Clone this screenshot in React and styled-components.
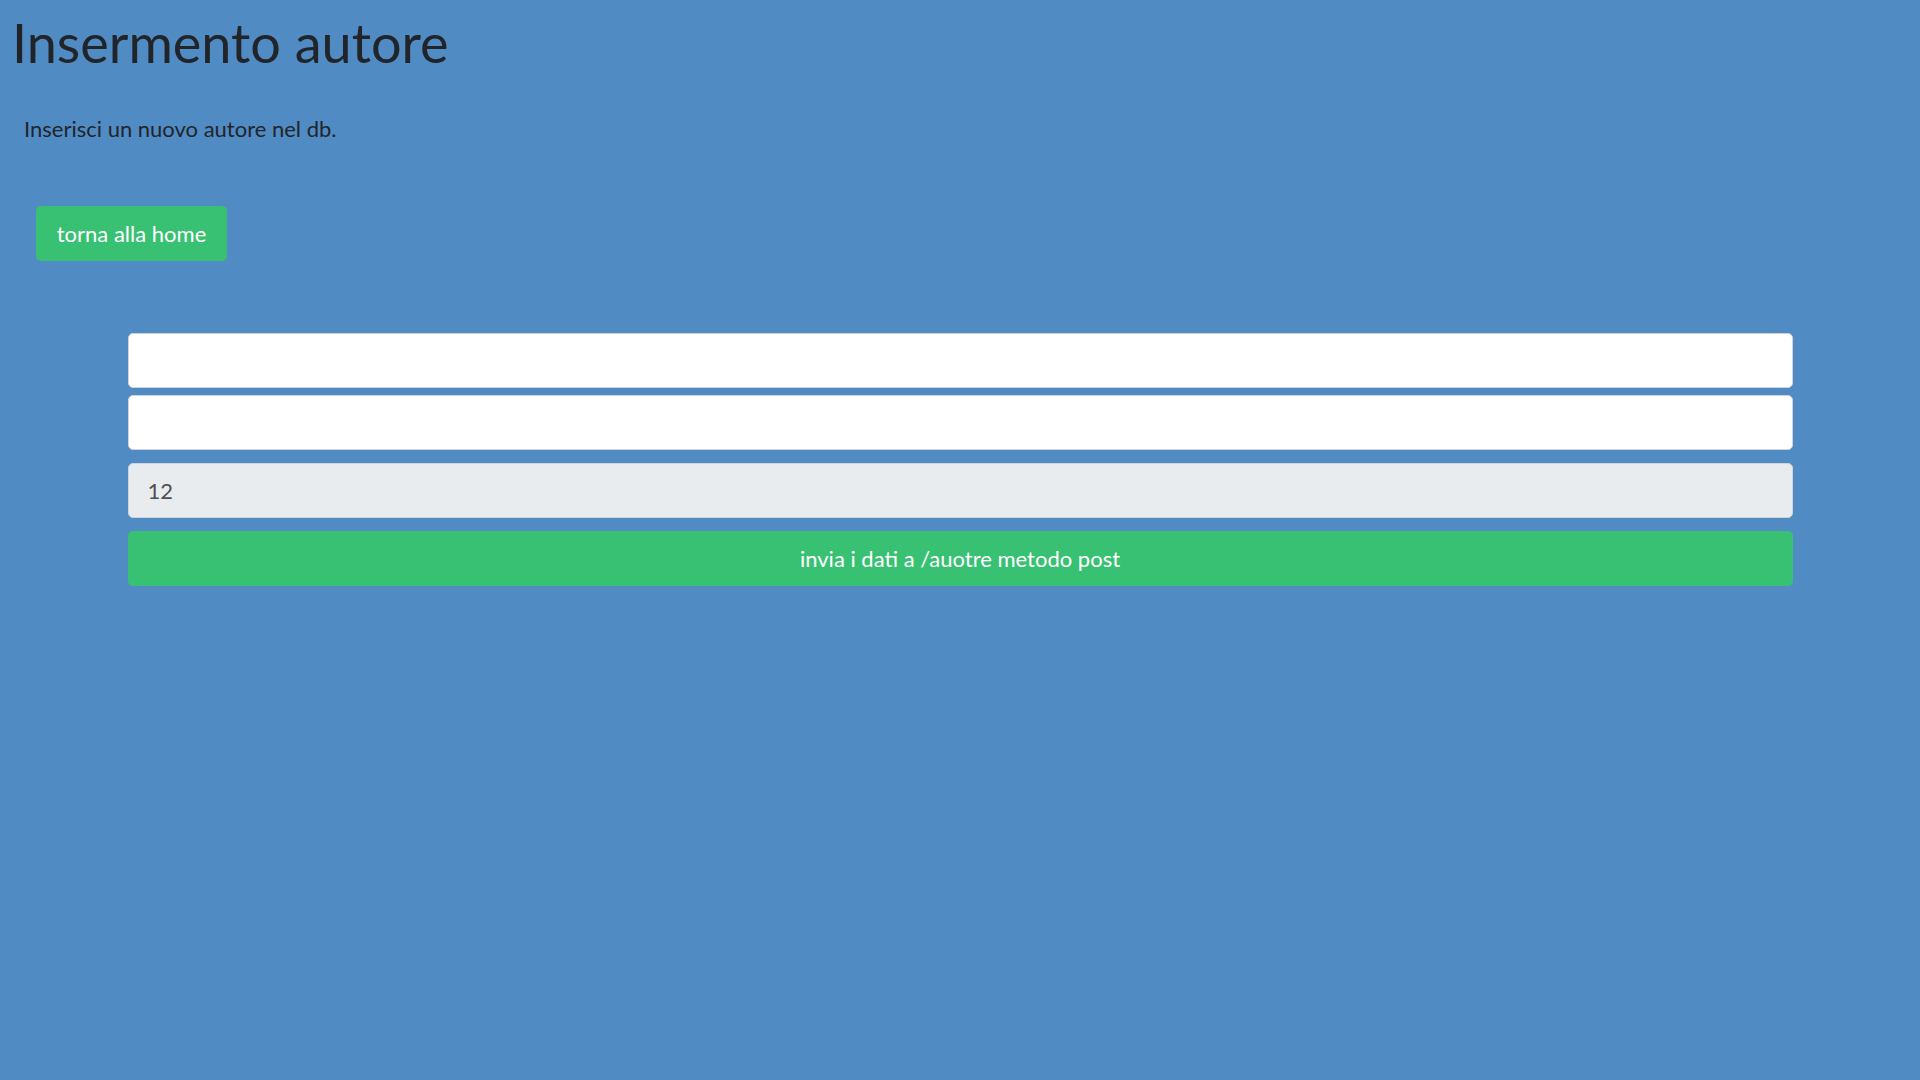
import React from "react"
import styled, { createGlobalStyle } from 'styled-components'

const GlobalStyle = createGlobalStyle`
    html, body {
        margin: 0;
        padding: 0;
        background-color: #518bc4;
    }
    body {
        font-family: 'Lato', 'Noto Sans', sans-serif;
        color: #212529;
        min-height: 1080px;
    }
    * {
        box-sizing: border-box;
    }
`;

const Page = styled.div`
    display: flex;
    flex-direction: column;
    align-items: flex-start;
`;

const Title = styled.h1`
    margin: 11px 0 0 12px;
    font-size: 54px;
    font-weight: 400;
    line-height: 1.2;
`;

const Lead = styled.p`
    margin: 36px 0 0 24px;
    font-size: 22px;
    line-height: 1.5;
`;

const HomeButton = styled.a`
    display: inline-flex;
    align-items: center;
    justify-content: center;
    margin: 61px 0 0 36px;
    width: 191px;
    height: 55px;
    border-radius: 5px;
    background-color: #38c172;
    color: #fff;
    font-size: 22px;
    text-decoration: none;
    cursor: pointer;
`;

const Form = styled.form`
    align-self: center;
    width: 1665px;
    margin-top: 72px;
    display: flex;
    flex-direction: column;
`;

const Input = styled.input`
    width: 100%;
    height: 55px;
    margin-top: ${props => props.gap || 0}px;
    padding: 0 19px;
    border: 1px solid #ced4da;
    border-radius: 5px;
    background-color: ${props => props.disabled ? '#e9ecef' : '#fff'};
    color: #495057;
    font-family: inherit;
    font-size: 22px;
    outline: none;
`;

const SubmitButton = styled.button`
    width: 100%;
    height: 55px;
    margin-top: 13px;
    border: none;
    border-radius: 5px;
    background-color: #38c172;
    color: #fff;
    font-family: inherit;
    font-size: 22px;
    cursor: pointer;
`;

export default function App() {
    return (
        <Page>
            <GlobalStyle />
            <Title>Insermento autore</Title>
            <Lead>Inserisci un nuovo autore nel db.</Lead>
            <HomeButton href="#">torna alla home</HomeButton>
            <Form onSubmit={e => e.preventDefault()}>
                <Input type="text" name="nome" />
                <Input type="text" name="cognome" gap={7} />
                <Input type="text" name="id" value="12" disabled gap={13} readOnly />
                <SubmitButton type="submit">invia i dati a /auotre metodo post</SubmitButton>
            </Form>
        </Page>
    );
}
